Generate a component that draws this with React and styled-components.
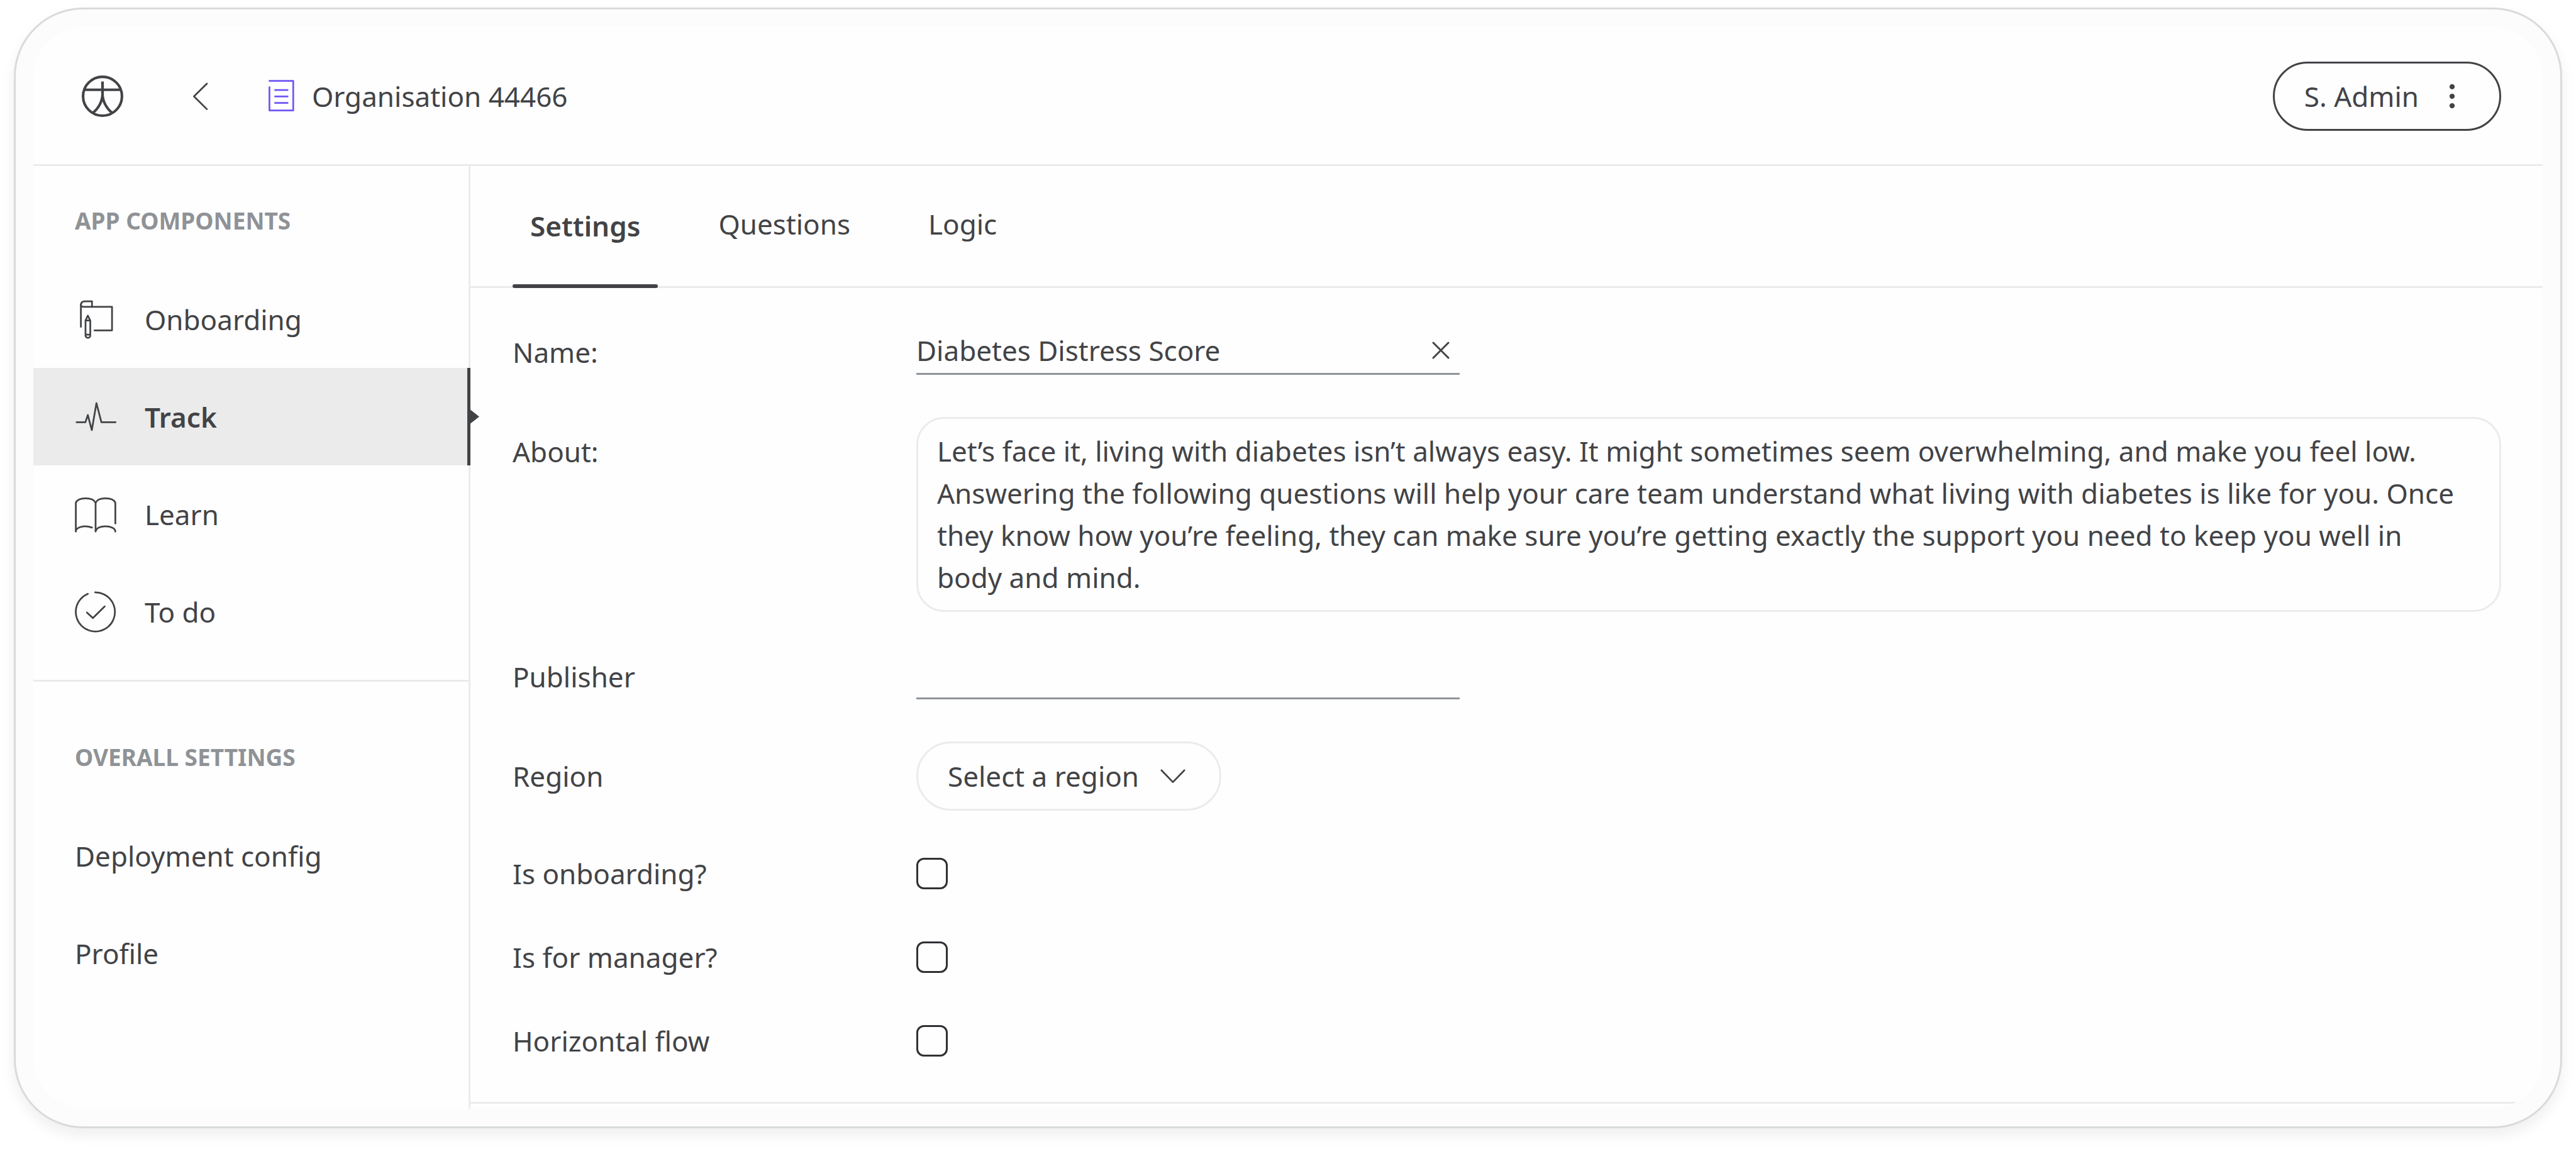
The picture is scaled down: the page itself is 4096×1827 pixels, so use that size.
import React, { useState } from "react";
import styled, { createGlobalStyle, css } from "styled-components";

const color = {
  ink: "#424346",
  muted: "#8f9296",
  line: "#ebebeb",
  field: "#8f9499",
  frame: "#d8dadc",
  accent: "#6f55f6",
  surface: "#fefefe",
};

const GlobalStyle = createGlobalStyle`
  *, *::before, *::after { box-sizing: border-box; }
  body {
    margin: 0;
    background: #ffffff;
    color: ${color.ink};
    font-family: "Noto Sans", "Open Sans", sans-serif;
    font-size: 44px;
    line-height: 66px;
  }
  button, input, select, textarea {
    margin: 0;
    padding: 0;
    border: 0;
    background: none;
    color: inherit;
    font: inherit;
    outline: none;
  }
  button { cursor: pointer; }
  a { color: inherit; text-decoration: none; }
`;

const Page = styled.div`
  display: flex;
  min-height: 100vh;
  padding: 12px 22px 33px;
`;

const Frame = styled.div`
  display: flex;
  flex: 1;
  padding: 27px 28px 28px;
  border: 3px solid ${color.frame};
  border-radius: 110px;
  background: #fcfcfc;
  box-shadow: 0 11px 22px rgba(0, 0, 0, 0.065);
`;

const Shell = styled.div`
  display: flex;
  flex: 1;
  flex-direction: column;
  overflow: hidden;
  border-radius: 82px;
  background: ${color.surface};
`;

const TopBar = styled.header`
  display: flex;
  align-items: center;
  justify-content: space-between;
  padding: 56px 66px 53px 77px;
  border-bottom: 3px solid ${color.line};
`;

const TopBarGroup = styled.div`
  display: flex;
  align-items: center;
`;

const Icon = styled.svg`
  display: block;
  flex: none;
  width: 66px;
  height: 66px;
  fill: none;
  stroke: currentColor;
  stroke-width: ${(p) => p.$weight || 4};
  stroke-linecap: ${(p) => p.$cap || "round"};
  stroke-linejoin: round;
`;

const BackButton = styled.button`
  margin-left: 89px;
`;

const Organisation = styled.h1`
  display: flex;
  align-items: center;
  gap: 16px;
  margin: 0 0 0 63px;
  font-size: 44px;
  font-weight: 400;

  svg { color: ${color.accent}; }
`;

const pill = css`
  height: 110px;
  border: 3px solid ${(p) => p.$tone};
  border-radius: 55px;
`;

const AccountButton = styled.button`
  ${pill}
  display: flex;
  align-items: center;
  gap: 20px;
  padding: 0 42px 0 47px;
`;

const Body = styled.div`
  display: flex;
  flex: 1;
`;

const Sidebar = styled.nav`
  flex: none;
  width: 695px;
  border-right: 3px solid ${color.line};
`;

const NavSection = styled.section`
  padding: ${(p) => (p.$divided ? "41px 0 0" : "8px 0 31px")};
  border-top: ${(p) => (p.$divided ? `3px solid ${color.line}` : "0")};
`;

const NavHeading = styled.h2`
  display: flex;
  align-items: center;
  height: 158px;
  margin: 0;
  padding-left: 66px;
  color: ${color.muted};
  font-size: 37px;
  font-weight: 700;
  text-transform: uppercase;
`;

const NavList = styled.ul`
  margin: 0;
  padding: 0;
  list-style: none;
`;

const NavLink = styled.a`
  position: relative;
  display: flex;
  align-items: center;
  gap: 45px;
  height: 155px;
  margin-right: -3px;
  padding-left: 66px;

  ${(p) =>
    p.$active &&
    css`
      border-right: 5px solid ${color.ink};
      background: ${color.line};
      font-weight: 600;

      &::after {
        position: absolute;
        top: 50%;
        left: 100%;
        width: 19px;
        height: 30px;
        margin-top: -15px;
        background: ${color.ink};
        clip-path: polygon(0 0, 100% 50%, 0 100%);
        content: "";
      }
    `}
`;

const Main = styled.main`
  display: flex;
  flex: 1;
  flex-direction: column;
  min-width: 0;
`;

const TabBar = styled.div`
  display: flex;
  gap: 68px;
  height: 194px;
  padding-left: 67px;
  border-bottom: 3px solid ${color.line};
`;

const Tab = styled.button`
  position: relative;
  margin-bottom: -3px;
  padding: 0 28px ${(p) => (p.$active ? 4 : 10)}px;
  font-weight: ${(p) => (p.$active ? 600 : 400)};

  &::after {
    position: absolute;
    right: 0;
    bottom: 0;
    left: 0;
    height: 6px;
    border-radius: 3px;
    background: ${(p) => (p.$active ? color.ink : "transparent")};
    content: "";
  }
`;

const Form = styled.form`
  display: flex;
  flex: 1;
  flex-direction: column;
  gap: 67px;
  padding: 66px 66px 64px 67px;
  border-bottom: 3px solid ${color.line};
`;

const FormFoot = styled.div`
  height: 8px;
`;

const Row = styled.div`
  display: flex;
  align-items: ${(p) => (p.$top ? "flex-start" : "center")};
`;

const Label = styled.label`
  flex: none;
  width: 642px;
  padding-top: ${(p) => (p.$top ? 22 : 0)}px;
`;

const LineField = styled.div`
  display: flex;
  align-items: center;
  gap: 16px;
  width: 864px;
  height: 72px;
  padding: 0 16px 3px 0;
  border-bottom: 3px solid ${color.field};
`;

const LineInput = styled.input`
  flex: 1;
  min-width: 0;
  height: 66px;
`;

const ClearButton = styled.button`
  flex: none;

  svg {
    width: 28px;
    height: 28px;
  }
`;

const TextBox = styled.textarea`
  display: block;
  flex: 1;
  min-width: 0;
  padding: 18px 56px 18px 30px;
  border: 3px solid ${color.line};
  border-radius: 44px;
  line-height: 67px;
  overflow: hidden;
  resize: none;
`;

const SelectWrap = styled.div`
  position: relative;

  svg {
    position: absolute;
    top: 22px;
    right: 44px;
    pointer-events: none;
  }
`;

const Select = styled.select`
  ${pill}
  display: block;
  padding: 0 127px 0 47px;
  appearance: none;
`;

const Checkbox = styled.input`
  width: 50px;
  height: 50px;
  border: 3px solid #303034;
  border-radius: 12px;
  appearance: none;

  &:checked { background: ${color.ink}; }
`;

const Logo = () => (
  <Icon viewBox="0 0 96 96" $weight={6} $cap="butt" role="img" aria-label="Home">
    <circle cx="48" cy="48" r="45" />
    <path d="M5 33H91" />
    <path d="M48 14V42C48 58 40 75 26 86" />
    <path d="M48 14V42C48 58 56 75 70 86" />
  </Icon>
);

const BackIcon = () => (
  <Icon viewBox="0 0 96 96">
    <path d="M64 19L34 48.5L64 78" />
  </Icon>
);

const DocumentIcon = () => (
  <Icon viewBox="0 0 96 96" aria-hidden="true">
    <path d="M21 12.5H76V81H21V27" />
    <path d="M34 33.5H63M34 48.5H63M34 63.5H63" />
  </Icon>
);

const DotsIcon = () => (
  <Icon viewBox="0 0 96 96" aria-hidden="true">
    <g fill="currentColor" stroke="none">
      <circle cx="48" cy="26" r="6" />
      <circle cx="48" cy="48" r="6" />
      <circle cx="48" cy="70" r="6" />
    </g>
  </Icon>
);

const CanvasIcon = () => (
  <Icon viewBox="0 0 96 96" aria-hidden="true">
    <path d="M14 65V15Q14 6 23 6H39.7V18.9" />
    <path d="M14 13Q14 18.9 20 18.9H86V73.2H45.3" />
    <path d="M24.7 50.2L30 39L35.7 50.2V85A5.500 5.500 0 0 1 24.7 85V50.2H35.7M24.7 83H35.7" />
  </Icon>
);

const PulseIcon = () => (
  <Icon viewBox="0 0 96 96" aria-hidden="true">
    <path d="M4 60.2H24.5L30 43.5L39.2 78.5L50 16L61.4 60.2H94" />
  </Icon>
);

const BookIcon = () => (
  <Icon viewBox="0 0 96 96" aria-hidden="true">
    <path d="M2.3 87.6V21C5 14 14 10.6 25 10.6C36 10.6 45 14 48 21V87.6" />
    <path d="M48 21C51 14 60 10.6 71 10.6C82 10.6 91 14 93.7 21V69" />
    <path d="M2.3 86C4 78 20 72 39.7 78.3" />
    <path d="M48 86C51 79 60 75.6 71 75.6C82 75.6 93.7 79 93.7 87.6" />
  </Icon>
);

const DoneIcon = () => (
  <Icon viewBox="0 0 96 96" aria-hidden="true">
    <path d="M47 2.7A45.3 45.3 0 1 1 30 6.2" />
    <path d="M28 49.3L41.7 62.3L69 35.3" />
  </Icon>
);

const CloseIcon = () => (
  <Icon viewBox="0 0 28 28" $weight={3}>
    <path d="M2 2L26 26M26 2L2 26" />
  </Icon>
);

const ChevronIcon = () => (
  <Icon viewBox="0 0 96 96" aria-hidden="true">
    <path d="M21.5 34.5L48 62L74.5 34.5" />
  </Icon>
);

const components = [
  { label: "Onboarding", icon: CanvasIcon },
  { label: "Track", icon: PulseIcon, active: true },
  { label: "Learn", icon: BookIcon },
  { label: "To do", icon: DoneIcon },
];

const settings = [{ label: "Deployment config" }, { label: "Profile" }];

const tabs = ["Settings", "Questions", "Logic"];

const flags = [
  { id: "onboarding", label: "Is onboarding?" },
  { id: "manager", label: "Is for manager?" },
  { id: "horizontal", label: "Horizontal flow" },
];

const aboutText =
  "Let’s face it, living with diabetes isn’t always easy. It might sometimes seem overwhelming, and make you feel low. Answering the following questions will help your care team understand what living with diabetes is like for you. Once they know how you’re feeling, they can make sure you’re getting exactly the support you need to keep you well in body and mind.";

function NavGroup({ title, items, divided }) {
  return (
    <NavSection $divided={divided}>
      <NavHeading>{title}</NavHeading>
      <NavList>
        {items.map(({ label, icon: ItemIcon, active }) => (
          <li key={label}>
            <NavLink href="#" $active={active} aria-current={active ? "page" : undefined}>
              {ItemIcon && <ItemIcon />}
              {label}
            </NavLink>
          </li>
        ))}
      </NavList>
    </NavSection>
  );
}

export default function App() {
  const [name, setName] = useState("Diabetes Distress Score");
  const [tab, setTab] = useState("Settings");

  return (
    <>
      <GlobalStyle />
      <Page>
        <Frame>
          <Shell>
            <TopBar>
              <TopBarGroup>
                <Logo />
                <BackButton type="button" aria-label="Back">
                  <BackIcon />
                </BackButton>
                <Organisation>
                  <DocumentIcon />
                  Organisation 44466
                </Organisation>
              </TopBarGroup>
              <AccountButton type="button" $tone={color.ink}>
                S. Admin
                <DotsIcon />
              </AccountButton>
            </TopBar>
            <Body>
              <Sidebar>
                <NavGroup title="App components" items={components} />
                <NavGroup title="Overall settings" items={settings} divided />
              </Sidebar>
              <Main>
                <TabBar role="tablist">
                  {tabs.map((item) => (
                    <Tab
                      key={item}
                      type="button"
                      role="tab"
                      aria-selected={item === tab}
                      $active={item === tab}
                      onClick={() => setTab(item)}
                    >
                      {item}
                    </Tab>
                  ))}
                </TabBar>
                <Form>
                  <Row>
                    <Label htmlFor="name">Name:</Label>
                    <LineField>
                      <LineInput
                        id="name"
                        type="text"
                        value={name}
                        onChange={(event) => setName(event.target.value)}
                      />
                      <ClearButton type="button" aria-label="Clear name" onClick={() => setName("")}>
                        <CloseIcon />
                      </ClearButton>
                    </LineField>
                  </Row>
                  <Row $top>
                    <Label htmlFor="about" $top>
                      About:
                    </Label>
                    <TextBox id="about" rows={4} defaultValue={aboutText} />
                  </Row>
                  <Row>
                    <Label htmlFor="publisher">Publisher</Label>
                    <LineField>
                      <LineInput id="publisher" type="text" />
                    </LineField>
                  </Row>
                  <Row>
                    <Label htmlFor="region">Region</Label>
                    <SelectWrap>
                      <Select id="region" $tone={color.line}>
                        <option>Select a region</option>
                      </Select>
                      <ChevronIcon />
                    </SelectWrap>
                  </Row>
                  {flags.map(({ id, label }) => (
                    <Row key={id}>
                      <Label htmlFor={id}>{label}</Label>
                      <Checkbox id={id} type="checkbox" />
                    </Row>
                  ))}
                </Form>
                <FormFoot />
              </Main>
            </Body>
          </Shell>
        </Frame>
      </Page>
    </>
  );
}
